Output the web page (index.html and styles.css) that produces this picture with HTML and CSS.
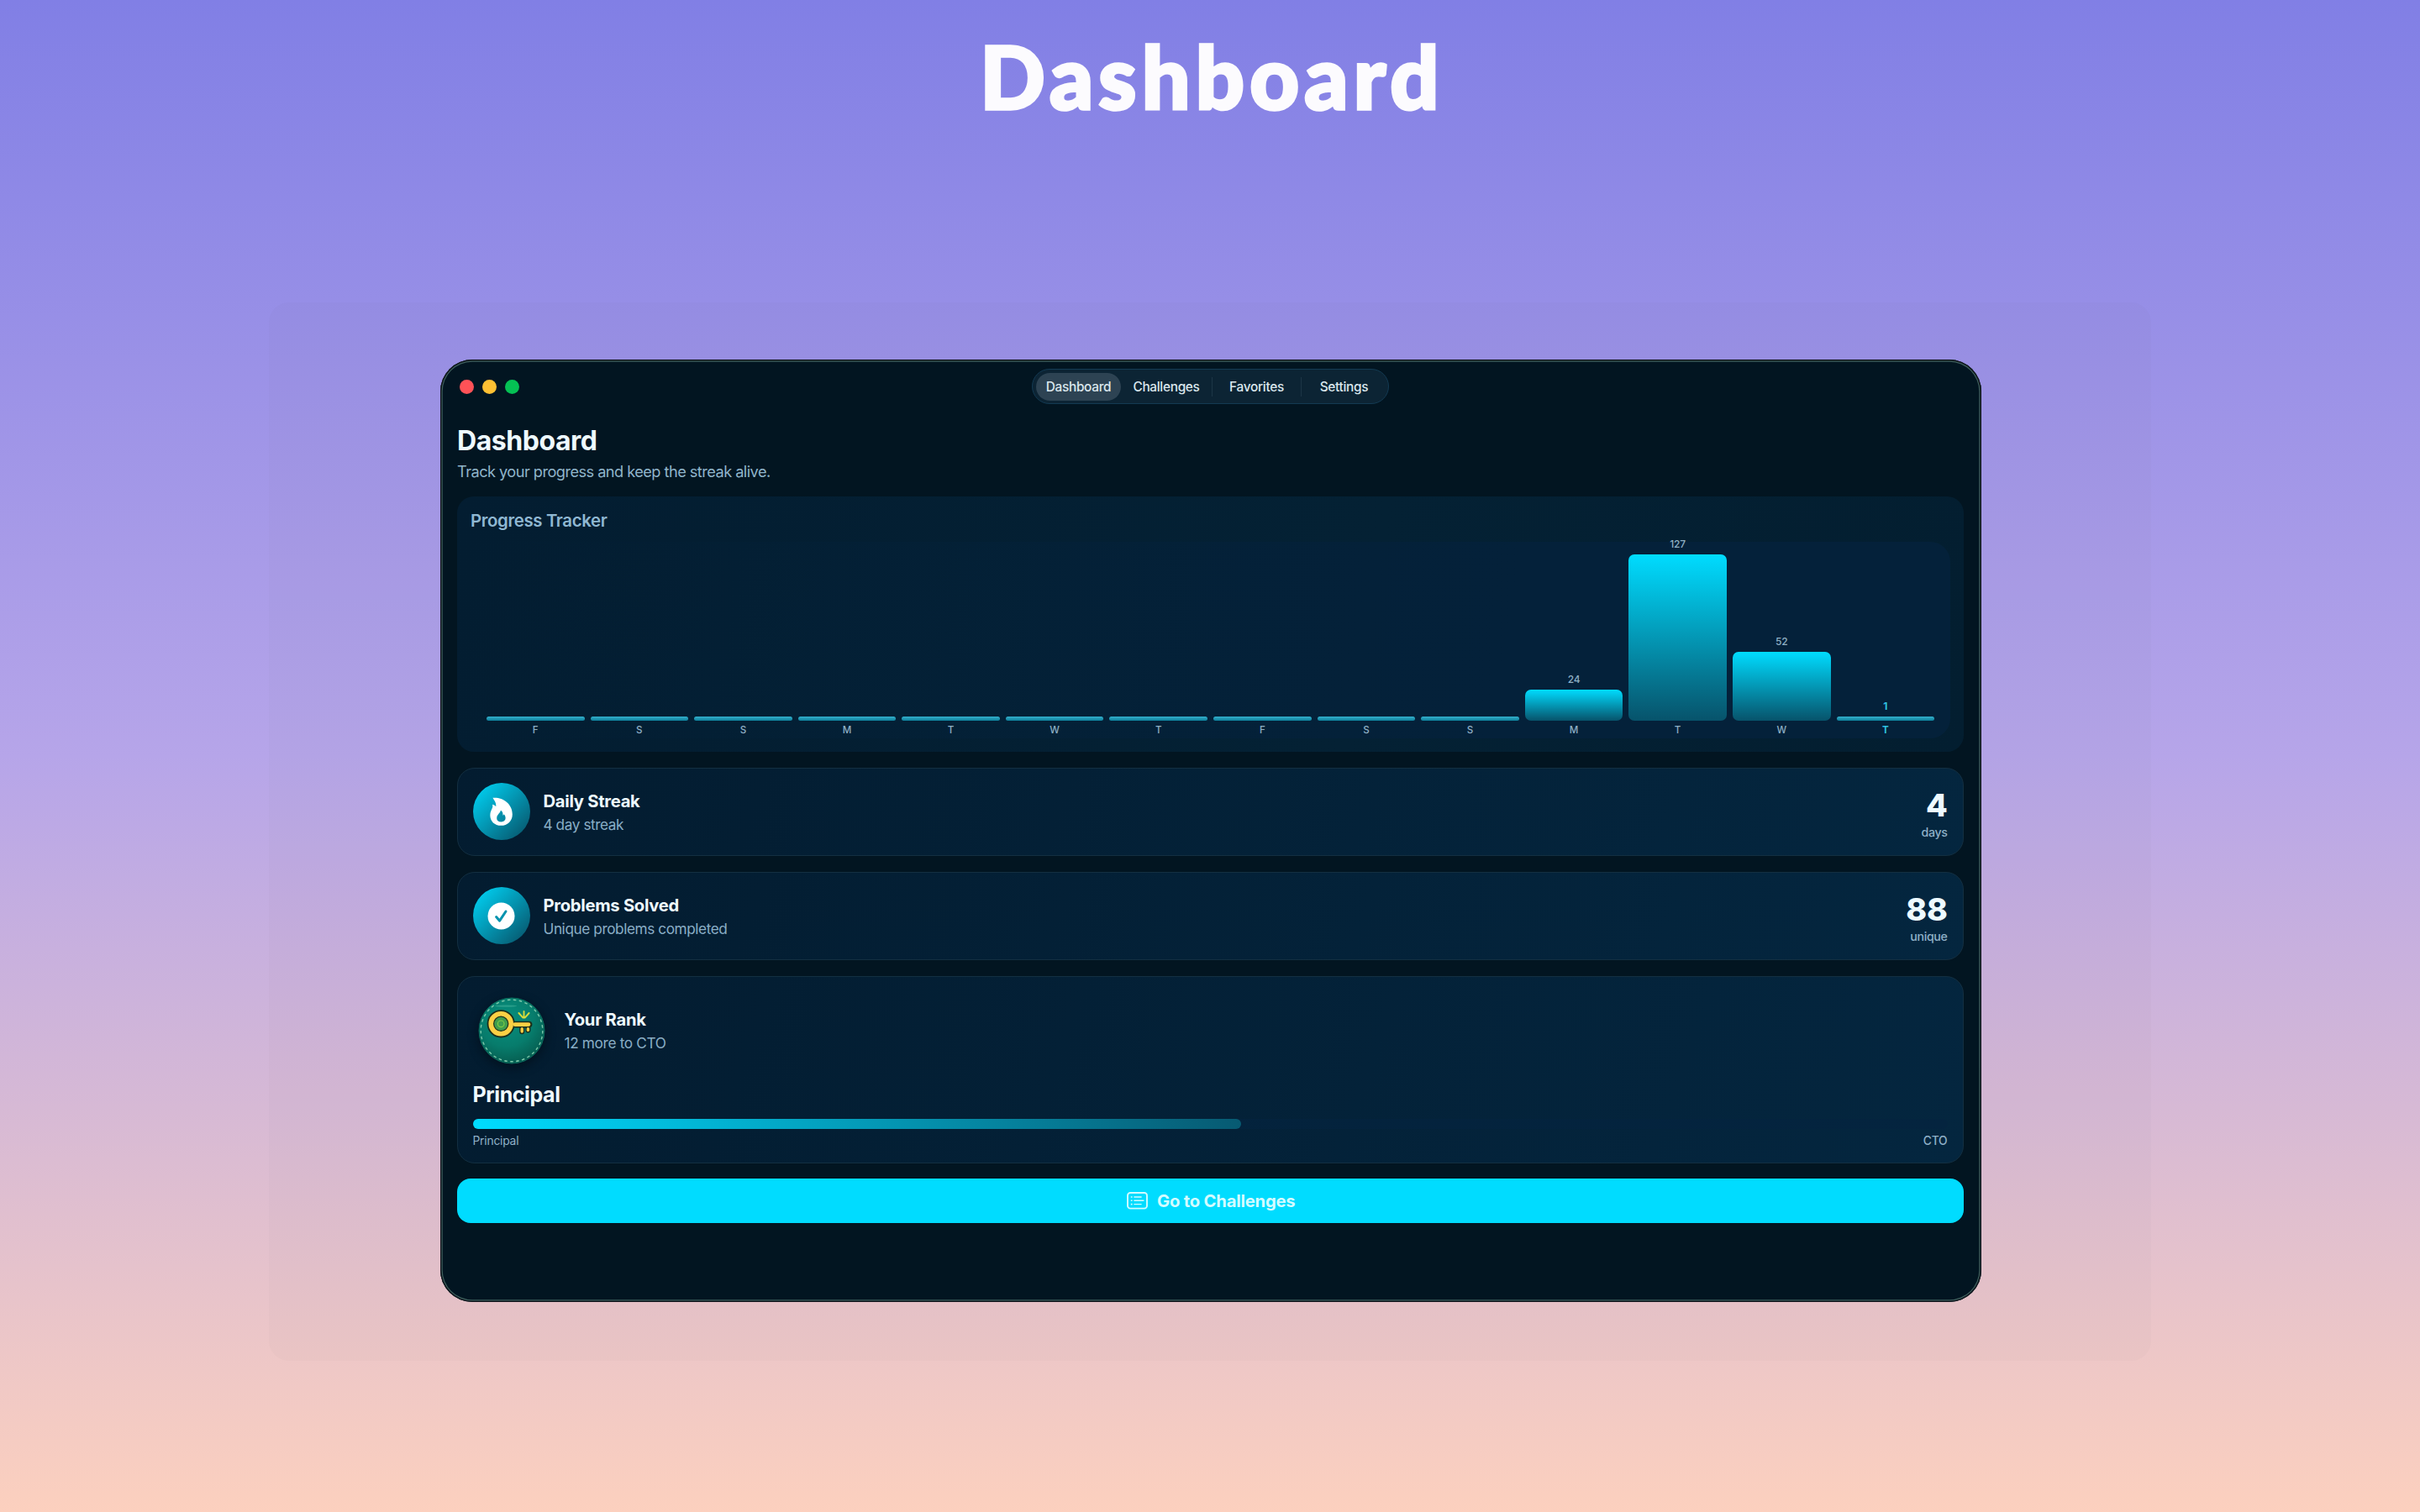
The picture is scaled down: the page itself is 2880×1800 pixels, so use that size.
FILE: index.html
```html
<!DOCTYPE html>
<html lang="en">
<head>
<meta charset="utf-8">
<title>Dashboard</title>
<link rel="stylesheet" href="styles.css">
</head>
<body>
<h1 class="headline">Dashboard</h1>
<main class="backdrop">
  <div class="window">
    <header class="titlebar">
      <div class="lights"><i class="light red"></i><i class="light yellow"></i><i class="light green"></i></div>
      <nav class="tabs">
        <a class="tab active">Dashboard</a><a class="tab challenges">Challenges</a><a class="tab favorites">Favorites</a><a class="tab settings">Settings</a>
      </nav>
    </header>
    <h2 class="page-title">Dashboard</h2>
    <p class="page-sub">Track your progress and keep the streak alive.</p>

    <section class="tracker">
      <h3 class="tracker-title">Progress Tracker</h3>
      <div class="chart">
        <div class="day"><i class="bar low" style="height:5px"></i><span class="label">F</span></div>
        <div class="day"><i class="bar low" style="height:5px"></i><span class="label">S</span></div>
        <div class="day"><i class="bar low" style="height:5px"></i><span class="label">S</span></div>
        <div class="day"><i class="bar low" style="height:5px"></i><span class="label">M</span></div>
        <div class="day"><i class="bar low" style="height:5px"></i><span class="label">T</span></div>
        <div class="day"><i class="bar low" style="height:5px"></i><span class="label">W</span></div>
        <div class="day"><i class="bar low" style="height:5px"></i><span class="label">T</span></div>
        <div class="day"><i class="bar low" style="height:5px"></i><span class="label">F</span></div>
        <div class="day"><i class="bar low" style="height:5px"></i><span class="label">S</span></div>
        <div class="day"><i class="bar low" style="height:5px"></i><span class="label">S</span></div>
        <div class="day"><span class="value">24</span><i class="bar" style="height:37px"></i><span class="label">M</span></div>
        <div class="day"><span class="value">127</span><i class="bar" style="height:198px"></i><span class="label">T</span></div>
        <div class="day"><span class="value">52</span><i class="bar" style="height:82px"></i><span class="label">W</span></div>
        <div class="day today"><span class="value">1</span><i class="bar low" style="height:5px"></i><span class="label">T</span></div>
      </div>
    </section>

    <section class="card stat">
      <div class="disc">
        <svg width="27" height="34" viewBox="0 0 27 34"><path fill="#fff" fill-rule="evenodd" d="M3.4.8C14-.6 26.8 7 26.8 20.4C26.8 28.6 20.8 33.8 13.3 33.8C5.6 33.8.3 28.6.3 21.4C.3 17.4 2 15.4 3 12.6C3.6 10.8 3.2 9.6 2.9 8.8C4.6 9 6 9.8 7.2 11C7.8 7 5.4 4 3.4.8ZM12.8 15.4C13 19 8.2 20.6 8.2 25C8.2 28 10.4 29.4 13.3 29.4C16.4 29.4 18.6 27.6 18.6 24.8C18.6 23 17.8 21.2 16.8 20.2C16.6 21 16 21.4 15.4 21.6C15.8 19 14.8 16.6 12.8 15.4Z"/></svg>
      </div>
      <div class="stat-text"><h4>Daily Streak</h4><p>4 day streak</p></div>
      <div class="stat-value"><b>4</b><small>days</small></div>
    </section>

    <section class="card stat">
      <div class="disc">
        <svg width="33" height="33" viewBox="0 0 33 33"><circle cx="16.5" cy="16.5" r="16" fill="#fff"/><path d="M10.6 17.6L14.6 22.2L22 11" fill="none" stroke="#0593ae" stroke-width="3" stroke-linecap="round" stroke-linejoin="round"/></svg>
      </div>
      <div class="stat-text"><h4>Problems Solved</h4><p>Unique problems completed</p></div>
      <div class="stat-value"><b>88</b><small>unique</small></div>
    </section>

    <section class="card rank">
      <div class="rank-head">
        <svg class="badge" width="80" height="80" viewBox="0 0 80 80">
          <defs><radialGradient id="felt" cx=".42" cy=".32" r=".7"><stop offset="0" stop-color="#078f7e"/><stop offset=".6" stop-color="#077c6c"/><stop offset="1" stop-color="#065d50"/></radialGradient></defs>
          <circle cx="40" cy="40" r="39" fill="url(#felt)" stroke="#0b6a5a" stroke-width="1"/>
          <circle cx="40" cy="40" r="36.8" fill="none" stroke="#7cc9ab" stroke-width="1.4" stroke-dasharray="3.5 3.5"/>
          <ellipse cx="33" cy="10.6" rx="13" ry="1.1" fill="#3fae97" opacity=".6"/>
          <g fill="none" stroke="#1d2f1c" stroke-linecap="round">
            <circle cx="27.2" cy="31.8" r="11.8" stroke-width="9.6"/>
            <path d="M44 32.6H60.6" stroke-width="7.6"/><path d="M52.2 36V41.2M59.4 36V39.6" stroke-width="6"/>
          </g>
          <circle cx="27.2" cy="31.8" r="8" fill="#3f9d4d"/>
          <g fill="none" stroke="#fbd044" stroke-linecap="round">
            <circle cx="27.2" cy="31.8" r="12" stroke-width="5.6"/>
            <path d="M43.6 32.6H60" stroke-width="4.6"/><path d="M52.2 37.8V41M59.4 37.8V39.4" stroke-width="3.4"/>
          </g>
          <circle cx="27.2" cy="31.8" r="3.8" fill="none" stroke="#7ecb45" stroke-width="1.2"/>
          <path d="M54.5 24.6V17M53.4 24.6L48.4 19M55.6 24.6L60.6 19" fill="none" stroke="#d6dc3c" stroke-width="1.9" stroke-linecap="round"/>
        </svg>
        <div class="stat-text"><h4>Your Rank</h4><p>12 more to CTO</p></div>
      </div>
      <h3 class="rank-name">Principal</h3>
      <div class="meter"><i style="width:52.1%"></i></div>
      <div class="meter-ends"><span>Principal</span><span class="end">CTO</span></div>
    </section>

    <a class="cta">
      <svg width="25" height="21" viewBox="0 0 25 21" fill="none" stroke="#d3fbff"><rect x="1" y="1" width="23" height="18.6" rx="3.2" stroke-width="1.9"/><path d="M8.4 6H17.6M8.4 10.3H20.4M8.4 14.6H17.6" stroke-width="1.4"/><path d="M4.8 6H6.6M4.8 10.3H6.6M4.8 14.6H6.6" stroke-width="1.6"/></svg>
      <span>Go to Challenges</span>
    </a>
  </div>
</main>
</body>
</html>
```
FILE: styles.css
```css
* { box-sizing: border-box; margin: 0; padding: 0; }
body {
  width: 2880px;
  height: 1800px;
  overflow: hidden;
  background: linear-gradient(180deg, #817fe5 0%, #b6a5e9 50%, #fcd0be 100%);
  font-family: Inter, "Liberation Sans", sans-serif;
  color: #eefaff;
}
.headline {
  height: 360px;
  padding: 31px 0 0 5px;
  text-align: center;
  font: 900 102px/120px Lato, sans-serif;
  letter-spacing: 6.2px;
  -webkit-text-stroke: 3.4px #fcfbfe;
  color: #fcfbfe;
}
.backdrop {
  width: 2240px;
  height: 1260px;
  margin: 0 auto;
  padding: 68px 202px 0 204px;
  border-radius: 24px;
  background: rgba(80, 90, 100, .025);
}
.window {
  height: 1122px;
  padding: 11px 21px 0 20px;
  border: 0;
  border-radius: 38px;
  background: #021521;
  box-shadow: inset 0 0 0 1.5px #10141c, inset 0 0 0 2.7px #3d5f5c;
}
.titlebar {
  display: grid;
  grid-template-columns: 1fr auto 1fr;
  height: 42px;
}
.lights { display: flex; gap: 10px; padding: 13px 0 0 3px; }
.light { width: 17px; height: 17px; border-radius: 50%; }
.red { background: #ff5257; }
.yellow { background: #ffc033; }
.green { background: #05c054; }
.tabs {
  display: flex;
  align-items: center;
  width: 425px;
  padding-left: 4px;
  border: 1px solid #133a53;
  border-radius: 21px;
  background: #0c2434;
  color: #dbe7ed;
}
.tab {
  font-size: 15.4px;
  font-weight: 500;
  line-height: 33px;
  letter-spacing: -.3px;
  text-align: center;
}
.tab.active { width: 101px; border-radius: 17px; background: #2d4353; }
.tab.challenges { width: 108px; }
.tab.favorites { width: 106px; }
.tab.settings { width: 102px; }
.tab.favorites, .tab.settings { height: 23px; line-height: 23px; border-left: 1px solid #1c3546; }
.page-title { margin-top: 24px; font-size: 32px; line-height: 40px; font-weight: 700; letter-spacing: -.45px; }
.page-sub { margin-top: 4px; font-size: 18.2px; line-height: 24px; letter-spacing: -.54px; color: #8fb4ca; }
.tracker {
  height: 304px;
  margin-top: 18px;
  padding: 16px 16px 0;
  border-radius: 20px;
  background: linear-gradient(100deg, #031d31, #042134 60%, #031e30);
}
.tracker-title { font-size: 20.4px; line-height: 26px; font-weight: 600; letter-spacing: -.37px; color: #8fb8d2; }
.chart {
  display: flex;
  align-items: flex-end;
  gap: 7px;
  height: 234px;
  margin-top: 12px;
  padding: 0 19px 3px;
  border-radius: 24px;
  background: linear-gradient(100deg, rgba(4, 33, 54, 0), #04213a 70%);
}
.day { flex: 1; display: flex; flex-direction: column; align-items: center; font-size: 11.6px; line-height: 14px; color: #8fb0c5; }
.bar { width: 100%; border-radius: 7px; background: linear-gradient(#00dcff, #07536b); }
.bar.low { border-radius: 2.5px; background: linear-gradient(#35b0cd, #0c7f9a); }
.value { margin-bottom: 5px; font-size: 12px; font-weight: 500; letter-spacing: -.1px; }
.label { margin-top: 4px; font-weight: 500; }
.today .value, .today .label { color: #2fc0e0; font-weight: 700; }
.card {
  margin-top: 18.5px;
  border: 1px solid #132f41;
  border-radius: 21px;
  background: linear-gradient(110deg, #031c30, #04263f);
}
.stat { display: flex; align-items: center; height: 105.5px; padding: 0 18.5px 0 17.5px; }
.disc {
  display: grid;
  place-items: center;
  width: 68px;
  height: 68px;
  border-radius: 50%;
  background: linear-gradient(135deg, #00d3f5 5%, #07546a 95%);
}
.stat-text { margin-left: 16px; }
.stat .stat-text { padding-top: 2.5px; }
.stat-text h4 { font-size: 20.2px; line-height: 28px; font-weight: 700; letter-spacing: -.28px; }
.stat-text p { font-size: 17.2px; line-height: 28px; letter-spacing: -.41px; color: #8aaec6; }
.stat-value { margin-left: auto; padding-top: 8px; text-align: right; }
.stat-value b { display: block; font-size: 37.5px; line-height: 40px; font-weight: 800; letter-spacing: -.3px; }
.stat-value small { display: block; margin-top: 1.5px; font-size: 14.2px; line-height: 22px; font-weight: 500; letter-spacing: -.35px; color: #8fb0c7; }
.rank { height: 223px; padding: 24px 18.5px 0 17.5px; }
.rank-head { display: flex; height: 80px; padding-left: 6.5px; }
.badge { border-radius: 50%; box-shadow: 0 4px 12px rgba(0, 8, 14, .5); }
.rank-head .stat-text { margin-left: 22.5px; padding-top: 13px; }
.rank-head p { letter-spacing: -.32px; }
.rank-name { margin-top: 20px; font-size: 25px; line-height: 32px; font-weight: 700; letter-spacing: -.4px; }
.meter { height: 12px; margin-top: 13.5px; border-radius: 6px; background: linear-gradient(90deg, #03213a, #04243f); }
.meter i { display: block; height: 12px; border-radius: 6px; background: linear-gradient(90deg, #00dcff, #075a72); }
.meter-ends { display: flex; justify-content: space-between; margin-top: 4.5px; font-size: 13.8px; line-height: 18px; letter-spacing: -.2px; color: #8fb0c7; }
.end { font-weight: 500; }
.cta {
  display: flex;
  align-items: center;
  justify-content: center;
  gap: 11.5px;
  height: 53px;
  margin-top: 18.5px;
  padding-left: 1px;
  border-radius: 16px;
  background: #00dcff;
  font-size: 20.3px;
  font-weight: 700;
  letter-spacing: -.25px;
  color: #d3fbff;
}
```
